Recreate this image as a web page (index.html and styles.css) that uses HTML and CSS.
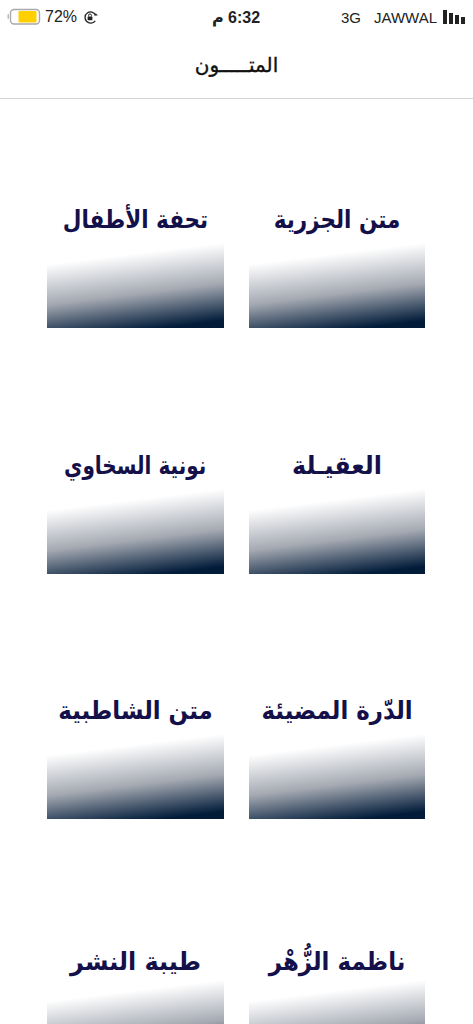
FILE: index.html
```html
<!DOCTYPE html>
<html lang="ar">
<head>
<meta charset="utf-8">
<title>المتون</title>
<link rel="stylesheet" href="styles.css">
</head>
<body>
<div class="status">
  <div class="status-left">
    <svg class="battery" width="34" height="18" viewBox="0 0 34 18"><rect x="0.5" y="6" width="1.5" height="5" rx="0.7" fill="#bbb"/><rect x="3.5" y="1.5" width="29" height="14.5" rx="3.5" fill="#fff" stroke="#a9a9a9" stroke-width="1.4"/><rect x="11.5" y="3" width="18" height="11.5" rx="1" fill="#ffcf00"/></svg>
    <span>72%</span>
    <svg class="lock" width="16" height="15" viewBox="0 0 16 15"><path d="M12.2 10.8A5.6 5.6 0 1 1 12.6 5" fill="none" stroke="#222" stroke-width="1.3"/><path d="M10.8 5.6h4l-2-2.4z" fill="#222"/><rect x="4.6" y="6.4" width="4.8" height="3.8" rx="0.6" fill="#222"/><path d="M5.6 6.5V5.3a1.4 1.4 0 0 1 2.8 0v1.2" fill="none" stroke="#222" stroke-width="1"/></svg>
  </div>
  <div class="status-time">6:32 م</div>
  <div class="status-right">
    <span>3G</span>
    <span>JAWWAL</span>
    <div class="bars"><i class="b1"></i><i class="b2"></i><i class="b3"></i><i class="b4"></i></div>
  </div>
</div>
<header class="head"><h1>المتـــــون</h1></header>
<main class="grid">
  <a class="card"><h2>متن الجزرية</h2><div class="tile"></div></a>
  <a class="card"><h2>تحفة الأطفال</h2><div class="tile"></div></a>
  <a class="card"><h2 class="fit-wide">العقيـلة</h2><div class="tile"></div></a>
  <a class="card"><h2 class="fit-narrow">نونية السخاوي</h2><div class="tile"></div></a>
  <a class="card"><h2 class="fit-mid">الدّرة المضيئة</h2><div class="tile"></div></a>
  <a class="card"><h2 class="fit-mid">متن الشاطبية</h2><div class="tile"></div></a>
  <a class="card"><h2 class="fit-mid low">ناظمة الزُّهْر</h2><div class="tile"></div></a>
  <a class="card"><h2 class="fit-wide low">طيبة النشر</h2><div class="tile"></div></a>
</main>
</body>
</html>
```
FILE: styles.css
```css
html, body { margin: 0; padding: 0; }
body {
  width: 473px;
  height: 1024px;
  overflow: hidden;
  background: #fff;
  font-family: "Liberation Sans", "DejaVu Sans", sans-serif;
  color: #222;
}
.status {
  display: grid;
  grid-template-columns: 1fr auto 1fr;
  align-items: center;
  height: 34px;
  padding: 0 8px 0 7px;
  font-size: 16px;
}
.status-left { display: flex; align-items: center; gap: 4px; }
.lock { margin-left: 2px; }
.status-time { font-size: 16px; font-weight: bold; direction: rtl; }
.status-right { display: flex; align-items: center; justify-content: flex-end; gap: 13px; font-size: 15px; }
.status-right span + span { margin-right: -7px; }
.bars { display: flex; align-items: flex-end; gap: 2px; height: 14px; }
.bars i { display: block; background: #222; width: 4px; }
.b1 { height: 14px; }
.b2 { height: 11px; }
.b3 { height: 9px; }
.b4 { height: 7px; }
.head {
  height: 64px;
  display: flex;
  align-items: center;
  justify-content: center;
  border-bottom: 1px solid #d4d4d4;
}
.head h1 {
  margin: -2px 0 0;
  font-family: "DejaVu Sans", sans-serif;
  font-size: 20px;
  font-weight: normal;
  color: #111;
  -webkit-text-stroke: 0.35px #111;
}
.grid {
  direction: rtl;
  display: grid;
  grid-template-columns: 176px 177px;
  column-gap: 25px;
  row-gap: 105.5px;
  padding: 0 48px 0 47px;
  margin-top: 89px;
}
.card { display: block; }
.card h2 {
  margin: 0;
  height: 48px;
  padding-top: 7px;
  line-height: 49px;
  text-align: center;
  white-space: nowrap;
  font-family: "DejaVu Sans", sans-serif;
  font-size: 25px;
  font-weight: bold;
  color: #14104a;
  transform: scaleX(0.86);
}
.card h2.fit-narrow { transform: scaleX(0.8); }
.card h2.fit-mid { transform: scaleX(0.915); }
.card h2.fit-wide { transform: scaleX(0.955); }
.card h2.low { height: 43px; padding-top: 12px; }
.tile {
  height: 85px;
  background: linear-gradient(173deg, #fff 20%, #a4a9b2 58%, #011b39 93%);
}
```
